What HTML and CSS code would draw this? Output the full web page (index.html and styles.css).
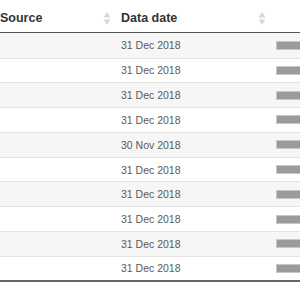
FILE: index.html
```html
<!DOCTYPE html>
<html>
<head>
<meta charset="utf-8">
<link rel="stylesheet" href="styles.css">
</head>
<body>
<table class="grid">
  <colgroup><col class="c-src"><col class="c-date"><col class="c-bar"></colgroup>
  <thead>
    <tr>
      <th><div class="th-in"><span>Source</span><svg class="sort" width="8" height="15" viewBox="0 0 8 15"><path d="M4 1 L7.5 6.5 L0.5 6.5 Z M4 14 L7.5 8.5 L0.5 8.5 Z" fill="#d8d8d8"/></svg></div></th>
      <th class="th-date"><div class="th-in"><span>Data date</span><svg class="sort" width="8" height="15" viewBox="0 0 8 15"><path d="M4 1 L7.5 6.5 L0.5 6.5 Z M4 14 L7.5 8.5 L0.5 8.5 Z" fill="#d8d8d8"/></svg></div></th>
      <th></th>
    </tr>
  </thead>
  <tbody>
    <tr><td></td><td>31 Dec 2018</td><td><div class="bar"></div></td></tr>
    <tr><td></td><td>31 Dec 2018</td><td><div class="bar"></div></td></tr>
    <tr><td></td><td>31 Dec 2018</td><td><div class="bar"></div></td></tr>
    <tr><td></td><td>31 Dec 2018</td><td><div class="bar"></div></td></tr>
    <tr><td></td><td>30 Nov 2018</td><td><div class="bar"></div></td></tr>
    <tr><td></td><td>31 Dec 2018</td><td><div class="bar"></div></td></tr>
    <tr><td></td><td>31 Dec 2018</td><td><div class="bar"></div></td></tr>
    <tr><td></td><td>31 Dec 2018</td><td><div class="bar"></div></td></tr>
    <tr><td></td><td>31 Dec 2018</td><td><div class="bar"></div></td></tr>
    <tr><td></td><td>31 Dec 2018</td><td><div class="bar"></div></td></tr>
  </tbody>
</table>
</body>
</html>
```
FILE: styles.css
```css
html, body {
  margin: 0;
  padding: 0;
  background: #fff;
  overflow: hidden;
}
body {
  font-family: "Liberation Sans", Arial, sans-serif;
}
.grid {
  border-collapse: collapse;
  table-layout: fixed;
  width: 360px;
  margin-left: -10px;
}
.c-src { width: 123px; }
.c-date { width: 155px; }
.c-bar { width: 82px; }
.grid th {
  height: 32px;
  padding: 0 2px 0 10px;
  text-align: left;
  font-size: 12.5px;
  font-weight: bold;
  color: #333;
  border-bottom: 1px solid #555;
  box-sizing: border-box;
}
.grid th.th-date { padding-left: 8px; }
.th-in {
  display: flex;
  align-items: center;
  justify-content: space-between;
  padding-top: 5px;
}
.sort { display: block; }
.grid td {
  height: 23.8px;
  padding: 0 8px;
  font-size: 10.5px;
  color: #5a5a5a;
  border-top: 1px solid #e2e2e2;
  vertical-align: middle;
}
.grid tbody tr:first-child td { border-top: none; height: 25px; }
.grid tbody tr:last-child td { height: 23px; }
.grid tbody tr:nth-child(odd) td { background: #f6f6f6; }
.grid tbody tr:last-child td { border-bottom: 2px solid #666; }
.bar {
  width: 60px;
  height: 7px;
  background: #9b9b9b;
  border: 1px solid #c8c8c8;
}
```
